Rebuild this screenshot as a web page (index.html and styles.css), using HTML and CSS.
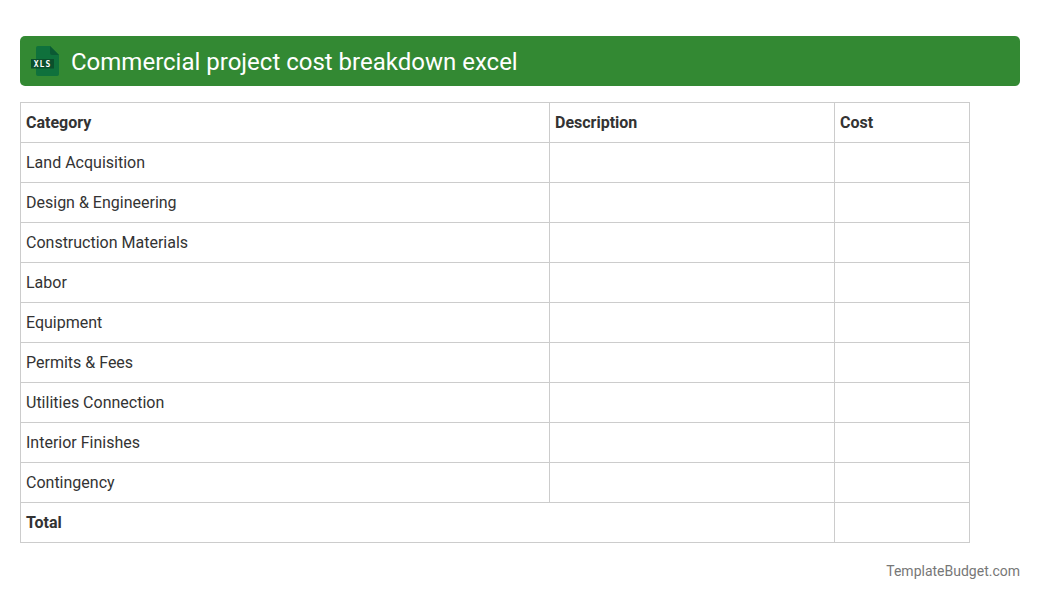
FILE: index.html
```html
<!DOCTYPE html>
<html lang="en">
<head>
<meta charset="utf-8">
<title>Commercial project cost breakdown excel</title>
<link rel="stylesheet" href="styles.css">
</head>
<body>
<header class="banner">
<svg class="file-icon" width="32" height="32" viewBox="0 0 32 32" aria-hidden="true">
<path d="M8 1 H20 L29 10 V29 a2 2 0 0 1 -2 2 H8 a2 2 0 0 1 -2 -2 V3 a2 2 0 0 1 2 -2 Z" fill="#0f713c"/>
<path d="M20 1 L29 10 H22 a2 2 0 0 1 -2 -2 Z" fill="#0b5a33"/>
<rect x="1" y="14" width="23" height="9.5" fill="#0b4f2c"/>
<text x="12.5" y="22" class="file-label" text-anchor="middle">XLS</text>
</svg>
<h1 class="title">Commercial project cost breakdown excel</h1>
</header>
<table class="sheet">
<colgroup><col class="col-a"><col class="col-b"><col class="col-c"></colgroup>
<thead>
<tr><th>Category</th><th>Description</th><th>Cost</th></tr>
</thead>
<tbody>
<tr><td>Land Acquisition</td><td></td><td></td></tr>
<tr><td>Design &amp; Engineering</td><td></td><td></td></tr>
<tr><td>Construction Materials</td><td></td><td></td></tr>
<tr><td>Labor</td><td></td><td></td></tr>
<tr><td>Equipment</td><td></td><td></td></tr>
<tr><td>Permits &amp; Fees</td><td></td><td></td></tr>
<tr><td>Utilities Connection</td><td></td><td></td></tr>
<tr><td>Interior Finishes</td><td></td><td></td></tr>
<tr><td>Contingency</td><td></td><td></td></tr>
<tr><th colspan="2">Total</th><td></td></tr>
</tbody>
</table>
<footer class="credit">TemplateBudget.com</footer>
</body>
</html>
```
FILE: styles.css
```css
html, body { margin: 0; padding: 0; }
body {
  width: 1040px;
  height: 600px;
  padding: 36px 20px 0;
  box-sizing: border-box;
  background: #fff;
  font-family: Roboto, sans-serif;
  color: #333;
  overflow: hidden;
}
.banner {
  display: flex;
  align-items: center;
  gap: 9px;
  height: 50px;
  padding-left: 10px;
  background: #338933;
  border-radius: 5px;
}
.file-icon { flex: none; }
.file-label { font: 700 8px "DejaVu Sans Mono", monospace; letter-spacing: 1px; fill: #fff; }
.title {
  margin: 0;
  padding-top: 2px;
  font-size: 24px;
  font-weight: 400;
  color: #fff;
}
.sheet {
  width: 949px;
  margin-top: 16px;
  border-collapse: collapse;
  table-layout: fixed;
  font-size: 16px;
}
.col-a { width: 529px; }
.col-b { width: 285px; }
.col-c { width: 135px; }
.sheet th, .sheet td {
  height: 40px;
  padding: 0 5px;
  box-sizing: border-box;
  border: 1px solid #ccc;
  text-align: left;
}
.sheet th { font-weight: 700; }
.sheet td { font-weight: 400; }
.credit {
  margin-top: 20px;
  text-align: right;
  font-size: 14px;
  color: #777;
}
```
